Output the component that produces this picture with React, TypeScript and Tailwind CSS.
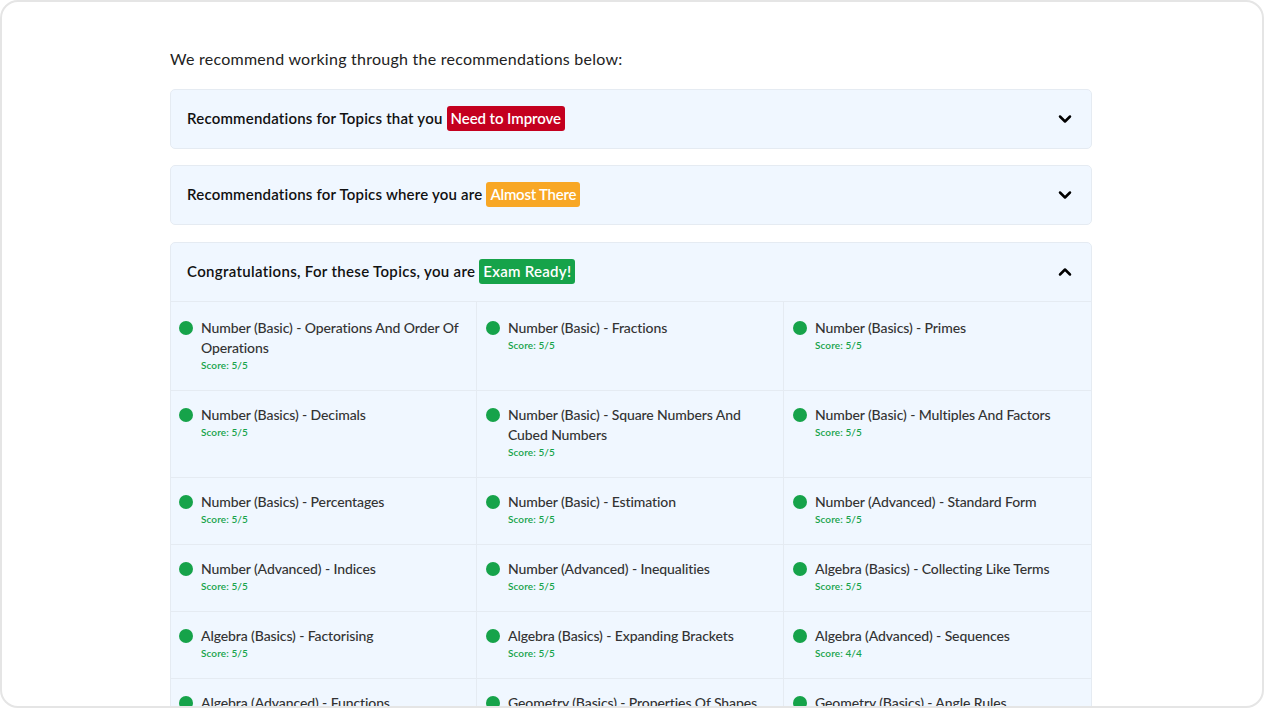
import { ChevronDown, ChevronUp } from "lucide-react"

const topics = [
  ["Number (Basic) - Operations And Order Of Operations", "5/5"],
  ["Number (Basic) - Fractions", "5/5"],
  ["Number (Basics) - Primes", "5/5"],
  ["Number (Basics) - Decimals", "5/5"],
  ["Number (Basic) - Square Numbers And Cubed Numbers", "5/5"],
  ["Number (Basic) - Multiples And Factors", "5/5"],
  ["Number (Basics) - Percentages", "5/5"],
  ["Number (Basic) - Estimation", "5/5"],
  ["Number (Advanced) - Standard Form", "5/5"],
  ["Number (Advanced) - Indices", "5/5"],
  ["Number (Advanced) - Inequalities", "5/5"],
  ["Algebra (Basics) - Collecting Like Terms", "5/5"],
  ["Algebra (Basics) - Factorising", "5/5"],
  ["Algebra (Basics) - Expanding Brackets", "5/5"],
  ["Algebra (Advanced) - Sequences", "4/4"],
  ["Algebra (Advanced) - Functions", "5/5"],
  ["Geometry (Basics) - Properties Of Shapes", "5/5"],
  ["Geometry (Basics) - Angle Rules", "5/5"],
]

const Header = ({ text, badge, color, textClass, badgeClass, open }: { text: string; badge: string; color: string; textClass: string; badgeClass: string; open?: boolean }) => (
  <div className="flex h-[58px] items-center justify-between pl-4 pr-4">
    <div className="mb-[2px] flex items-center gap-1 text-[15px] font-semibold text-[#111]">
      <span className={textClass}>{text}</span>
      <span className={`rounded-[3px] px-1 py-[3px] leading-[19px] text-white ${color} ${badgeClass}`}>{badge}</span>
    </div>
    {open ? <ChevronUp className="h-5 w-5 text-black" strokeWidth={3} /> : <ChevronDown className="h-5 w-5 text-black" strokeWidth={3} />}
  </div>
)

export default function App() {
  return (
    <div className="h-[708px] w-[1264px] overflow-hidden rounded-[18px] border-2 border-[#e5e5e5] bg-white font-['Lato',sans-serif]">
      <div className="ml-[168px] w-[922px] pt-[46px]">
        <p className="text-base leading-[22px] tracking-[0.25px] text-[#222]">We recommend working through the recommendations below:</p>
        <div className="mt-[19px] rounded-[5px] border border-[#e5ebf2] bg-[#f0f7ff]">
          <Header text="Recommendations for Topics that you" badge="Need to Improve" color="bg-[#c4001f]" textClass="tracking-[0.2px]" badgeClass="tracking-[-0.07px]" />
        </div>
        <div className="mt-4 rounded-[5px] border border-[#e5ebf2] bg-[#f0f7ff]">
          <Header text="Recommendations for Topics where you are" badge="Almost There" color="bg-[#f8a725]" textClass="tracking-[0.2px]" badgeClass="tracking-[-0.25px]" />
        </div>
        <div className="mt-[17px] rounded-[5px] border border-[#e5ebf2] bg-[#f0f7ff]">
          <Header text="Congratulations, For these Topics, you are" badge="Exam Ready!" color="bg-[#16a34a]" textClass="tracking-[0.32px]" badgeClass="tracking-[0.27px]" open />
          <div className="grid grid-cols-[306px_307px_307px] border-t border-[#e5ebf2]">
            {topics.map(([name, score], i) => (
              <div
                key={name}
                className={`flex gap-2 border-b border-[#e5ebf2] pr-3 ${i % 3 !== 2 ? "border-r" : ""} ${i % 3 !== 0 ? "pl-[9px]" : "pl-2"} ${i < 3 ? "h-[89px] pt-4" : i < 6 ? "h-[87px] pt-[14px]" : "h-[67px] pt-[14px]"}`}
              >
                <span className="mt-[3px] h-[14px] w-[14px] shrink-0 rounded-full bg-[#16a34a]" />
                <div>
                  <div className="text-sm font-medium leading-5 tracking-[-0.1px] text-[#333]">{name}</div>
                  <div className="text-[10px] font-semibold leading-[14px] tracking-[0.1px] text-[#16a34a]">Score: {score}</div>
                </div>
              </div>
            ))}
          </div>
        </div>
      </div>
    </div>
  )
}
